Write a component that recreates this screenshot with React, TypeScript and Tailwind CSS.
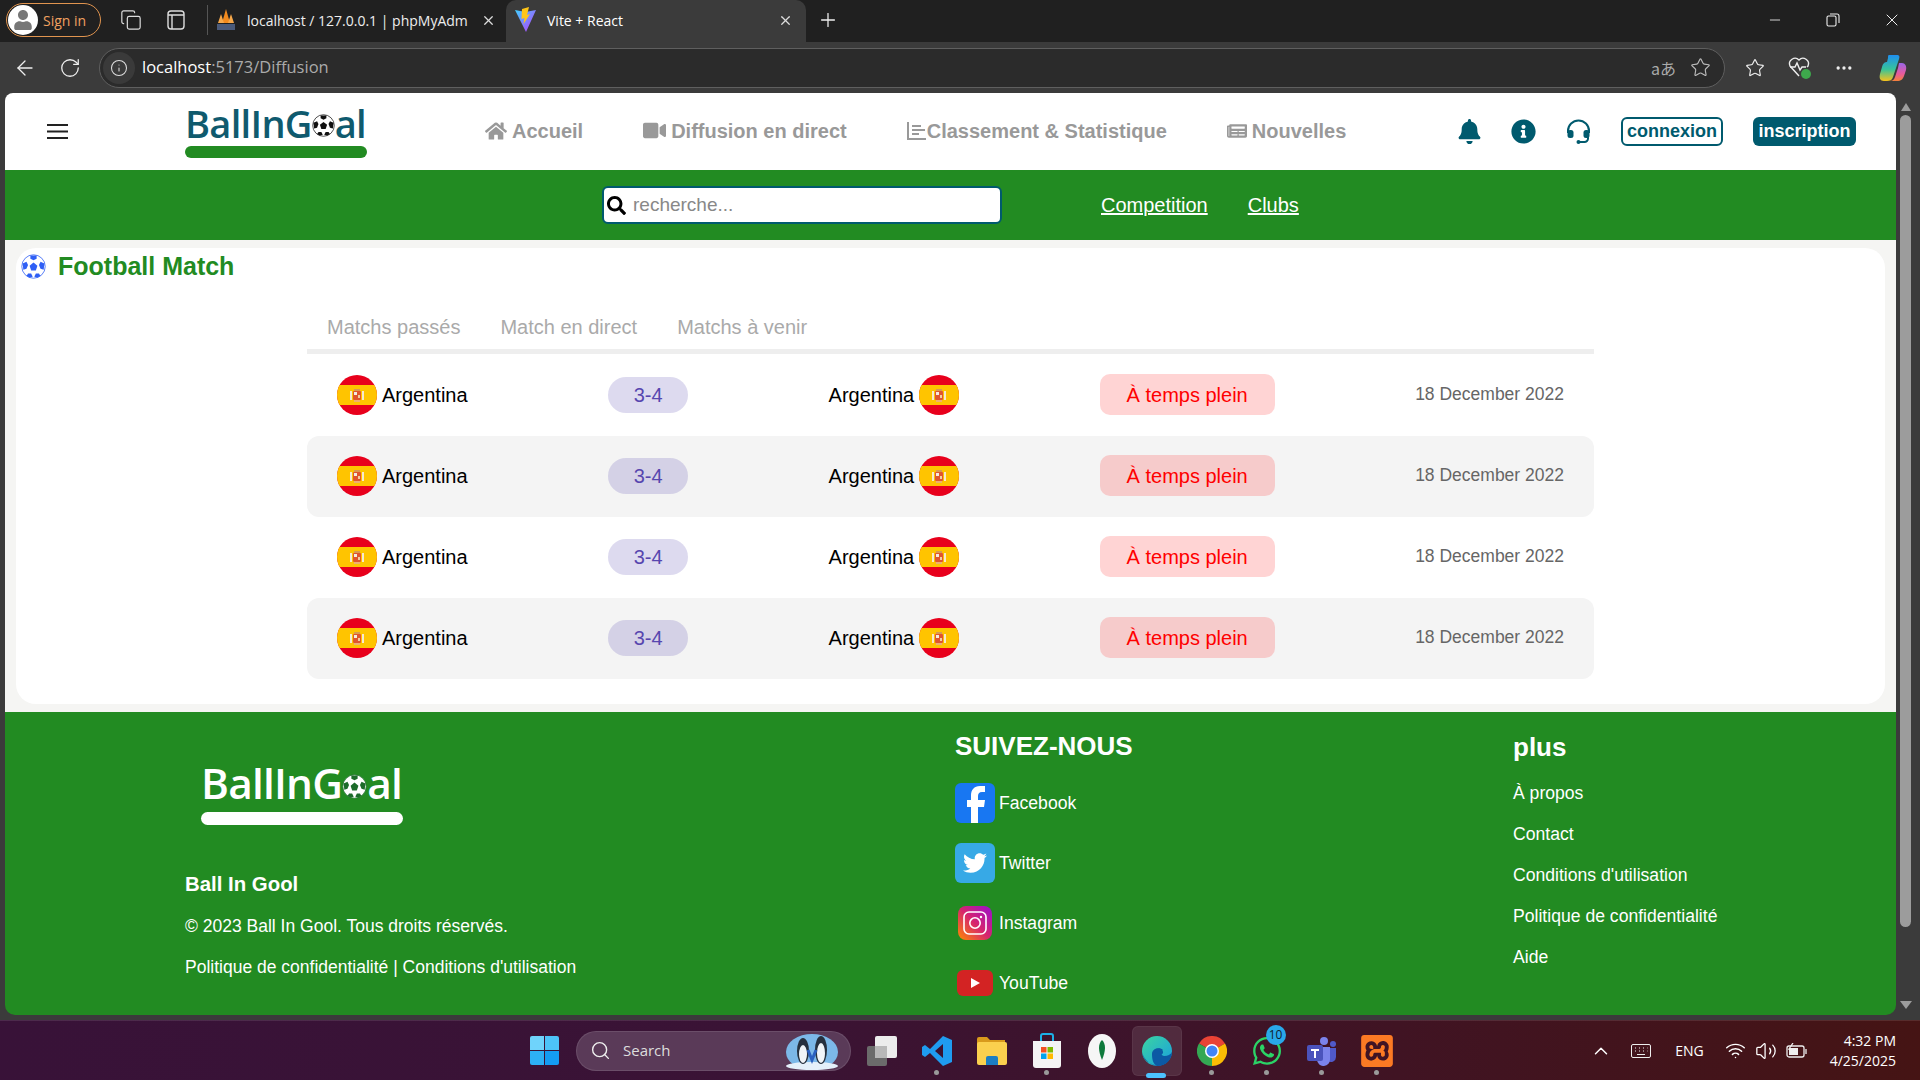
import { ArrowLeft, ChevronUp, Copy, Info, Minus, MoreHorizontal, Plus, RotateCw, Search, Star, Volume2, Wifi, X } from "lucide-react";
import { FaBell, FaHome, FaInfoCircle, FaNewspaper, FaSearch, FaTwitter, FaUser, FaVideo, FaWhatsapp } from "react-icons/fa";
import { SiXampp } from "react-icons/si";

const MATCHES = [0, 1, 2, 3];
const MORE_LINKS = ["À propos", "Contact", "Conditions d'utilisation", "Politique de confidentialité", "Aide"];

function SpainFlag() {
  return (
    <svg width="40" height="40" viewBox="0 0 40 40" className="shrink-0">
      <defs>
        <clipPath id="flag-clip">
          <circle cx="20" cy="20" r="20" />
        </clipPath>
      </defs>
      <g clipPath="url(#flag-clip)">
        <rect width="40" height="40" fill="#e8001c" />
        <rect y="10" width="40" height="20" fill="#ffc400" />
        <rect x="13" y="16" width="2" height="9" fill="#f6ead0" />
        <rect x="25" y="16" width="2" height="9" fill="#f6ead0" />
        <rect x="17" y="14" width="6" height="2" fill="#d99a50" />
        <rect x="16" y="16" width="8" height="9" rx="1" fill="#e0552e" />
        <rect x="17" y="17" width="3" height="3" fill="#f2ede0" />
        <rect x="21" y="20" width="2" height="3" fill="#f2d0a0" />
        <rect x="17" y="25" width="6" height="2" fill="#f0b070" />
      </g>
    </svg>
  );
}

function SoccerBall({ size, dark }: { size: number; dark: string }) {
  return (
    <svg width={size} height={size} viewBox="0 0 32 32" className="shrink-0">
      <circle cx="16" cy="16" r="15" fill="#fff" stroke={dark} strokeWidth="1" />
      <polygon points="16,11 21,15 19,21 13,21 11,15" fill={dark} />
      <polygon points="12,2 20,2 20,6 16,8 12,6" fill={dark} />
      <polygon points="2,12 7,10 9,14 7,19 3,20" fill={dark} />
      <polygon points="30,12 25,10 23,14 25,19 29,20" fill={dark} />
      <polygon points="9,25 13,25 15,29 11,30 7,28" fill={dark} />
      <polygon points="23,25 19,25 17,29 21,30 25,28" fill={dark} />
    </svg>
  );
}

function Logo({ text, bar, ball, ballSize }: { text: string; bar: string; ball: string; ballSize: number }) {
  return (
    <div className="flex flex-col">
      <div className={`flex items-center font-['Open_Sans',sans-serif] leading-none font-semibold ${text}`}>
        <span>BallInG</span>
        <span className="mt-[6px]">
          <SoccerBall size={ballSize} dark={ball} />
        </span>
        <span>al</span>
      </div>
      <div className={`rounded-full ${bar}`} />
    </div>
  );
}

function NavItem({ icon, label, gap }: { icon: React.ReactNode; label: string; gap: string }) {
  return (
    <a className={`flex items-center text-[20px] font-bold text-[#999] ${gap}`}>
      {icon}
      {label}
    </a>
  );
}

function MatchRow({ shaded }: { shaded: boolean }) {
  return (
    <div className={`flex h-[81px] items-center justify-between px-[30px] pb-[2px] ${shaded ? "rounded-[12px] bg-[#f4f4f4]" : ""}`}>
      <div className="flex items-center gap-[5px] text-[20px] text-black">
        <SpainFlag />
        Argentina
      </div>
      <div className="flex h-[36px] w-[80px] items-center justify-center rounded-[18px] bg-[#5746af]/20 text-[20px] text-[#5746af]">3-4</div>
      <div className="flex items-center gap-[5px] text-[20px] text-black">
        Argentina
        <SpainFlag />
      </div>
      <div className="flex h-[41px] w-[175px] items-center justify-center rounded-[10px] bg-[#ff0000]/[0.17] text-[20px] text-[#ff0000]">À temps plein</div>
      <div className="text-[17.5px] text-[#666]">18 December 2022</div>
    </div>
  );
}

function SocialRow({ icon, label }: { icon: React.ReactNode; label: string }) {
  return (
    <a className="flex h-[40px] items-center gap-[4px] text-[17.6px] text-white">
      <span className="flex w-[40px] justify-center">{icon}</span>
      {label}
    </a>
  );
}

function BrowserChrome() {
  return (
    <div className="font-['Open_Sans',sans-serif] text-white">
      <div className="flex h-[42px] items-center bg-[#202020] pb-[2px]">
        <div className="ml-[6px] flex h-[34px] w-[95px] items-center gap-[5px] rounded-full border border-[#e0944f] pl-[1px]">
          <span className="flex h-[30px] w-[30px] items-center justify-center overflow-hidden rounded-full bg-white text-[#777]">
            <FaUser size={20} />
          </span>
          <span className="text-[14px] text-[#f0a060]">Sign in</span>
        </div>
        <Copy size={22} strokeWidth={1.3} className="ml-[19px] text-[#ddd]" />
        <svg width="18" height="20" viewBox="0 0 18 20" className="ml-[25px]" fill="none" stroke="#ddd" strokeWidth="1.4">
          <rect x="1" y="1" width="16" height="18" rx="3" />
          <path d="M1 5h16M5 5v14" />
        </svg>
        <div className="ml-[22px] h-[30px] w-px bg-[#555]" />
        <div className="ml-[7px] flex w-[291px] items-center">
          <svg width="20" height="24" viewBox="0 0 20 24" className="ml-[1px]">
            <path d="M10 1 14 15H6Z" fill="#f28a1e" />
            <path d="M5 6 8 15H2Z" fill="#f7a84a" />
            <path d="M15 6 18 15h-6Z" fill="#f7a84a" />
            <rect x="1" y="16" width="18" height="6" fill="#4a5a7a" />
          </svg>
          <span className="ml-[11px] w-[222px] text-[14px] whitespace-nowrap text-[#eee]">localhost / 127.0.0.1 | phpMyAdm</span>
          <X size={15} className="ml-[12px] text-[#ddd]" />
        </div>
        <div className="-mb-[2px] flex h-[42px] w-[300px] items-center rounded-t-[10px] bg-[#3b3b3b] pb-[2px] pl-[9px]">
          <svg width="21" height="26" viewBox="0 0 21 26">
            <defs>
              <linearGradient id="vite-a" x1="0" y1="0" x2="1" y2="1">
                <stop offset="0" stopColor="#41d1ff" />
                <stop offset="1" stopColor="#bd34fe" />
              </linearGradient>
            </defs>
            <path d="M0 3 10.5 5 21 3 11 25Z" fill="url(#vite-a)" />
            <path d="M14 0 7 2 6.5 12 9.5 11 8.5 17 15 7 12 8Z" fill="#ffc517" />
          </svg>
          <span className="ml-[11px] text-[14px]">Vite + React</span>
          <X size={15} className="ml-[155px] text-[#ddd]" />
        </div>
        <Plus size={22} strokeWidth={1.4} className="ml-[11px] text-[#eee]" />
        <Minus size={16} strokeWidth={1.3} className="ml-[928px] text-[#eee]" />
        <svg width="14" height="14" viewBox="0 0 14 14" className="ml-[43px]" fill="none" stroke="#eee" strokeWidth="1.1">
          <rect x="1" y="3" width="9" height="10" rx="1.5" />
          <path d="M4 1h7a2 2 0 0 1 2 2v7" />
        </svg>
        <X size={20} strokeWidth={1.2} className="ml-[42px] text-[#eee]" />
      </div>
      <div className="flex h-[51px] items-center bg-[#3b3b3b]">
        <ArrowLeft size={24} strokeWidth={1.3} className="ml-[13px] text-[#eee]" />
        <RotateCw size={22} strokeWidth={1.4} className="ml-[22px] text-[#eee]" />
        <div className="ml-[18px] flex h-[40px] w-[1626px] items-center rounded-full border border-[#5f5f5f] bg-[#2b2b2b] pr-[13px]">
          <span className="ml-[3px] flex h-[32px] w-[32px] items-center justify-center rounded-full bg-[#3a3a3a]">
            <Info size={18} strokeWidth={1.4} className="text-[#ddd]" />
          </span>
          <span className="ml-[7px] text-[16.5px] text-white">localhost</span>
          <span className="text-[16.5px] text-[#aaa]">:5173/Diffusion</span>
          <span className="ml-auto font-['Noto_Sans_CJK_JP',sans-serif] text-[16px] text-[#aaa]">aあ</span>
          <Star size={21} strokeWidth={1.3} className="ml-[14px] text-[#bbb]" />
        </div>
        <Star size={20} strokeWidth={1.4} className="ml-[20px] text-[#eee]" />
        <svg width="26" height="28" viewBox="0 0 26 28" className="ml-[22px]" fill="none" stroke="#eee" strokeWidth="1.4">
          <path d="M12 22 3 12a5.5 5.5 0 0 1 9-6 5.5 5.5 0 0 1 9 6l-1 1" />
          <path d="M3 13h5l2-4 3 7 2-3h4" />
          <circle cx="19" cy="20" r="5" fill="#3ea84c" stroke="none" />
        </svg>
        <MoreHorizontal size={20} className="ml-[21px] text-[#eee]" />
        <svg width="30" height="30" viewBox="0 0 30 30" className="ml-[24px]">
          <defs>
            <linearGradient id="copilot-a" x1="0" y1="0" x2="0" y2="1">
              <stop offset="0" stopColor="#1f8ff0" />
              <stop offset="0.55" stopColor="#37c49a" />
              <stop offset="1" stopColor="#f7c21c" />
            </linearGradient>
            <linearGradient id="copilot-b" x1="0" y1="0" x2="0" y2="1">
              <stop offset="0" stopColor="#9a66e8" />
              <stop offset="0.6" stopColor="#e85a9c" />
              <stop offset="1" stopColor="#f5813a" />
            </linearGradient>
          </defs>
          <path d="M11 2h8c2 0 3 1 2 4l-6 18c-1 3-3 4-6 4H6c-4 0-5-3-4-7l2-7c1-4 3-5 5-5l1-4c0-2 0-3 1-3Z" fill="url(#copilot-a)" />
          <path d="M19 28h-7c2 0 4-1 5-4l2-6 1-3 1-5h3c3 0 5 3 4 7l-2 6c-1 3-3 5-7 5Z" fill="url(#copilot-b)" />
        </svg>
      </div>
    </div>
  );
}

function TaskIcon({ children, dot, active }: { children: React.ReactNode; dot?: boolean; active?: boolean }) {
  return (
    <div className="relative flex h-[60px] w-[55px] items-center justify-center">
      {active && <div className="absolute top-[5px] left-[2.5px] h-[50px] w-[50px] rounded-[6px] border border-white/5 bg-white/10" />}
      <div className="relative flex">{children}</div>
      {dot && <div className="absolute bottom-[6px] left-[25px] h-[5px] w-[5px] rounded-full bg-[#9a9a9a]" />}
      {active && <div className="absolute bottom-[3px] left-[17px] h-[5px] w-[20px] rounded-full bg-[#4cc2ff]" />}
    </div>
  );
}

function Taskbar() {
  return (
    <div className="flex h-[60px] items-center border-t border-white/10 bg-[linear-gradient(90deg,#381238,#3a1335_40%,#451414)] pl-[530px] font-['Open_Sans',sans-serif] text-white">
      <div className="grid h-[29px] w-[29px] grid-cols-2 gap-[1px]">
        <div className="rounded-tl-[2px] bg-[#6fd3fb]" />
        <div className="rounded-tr-[2px] bg-[#4dc3f8]" />
        <div className="rounded-bl-[2px] bg-[#2db0f5]" />
        <div className="rounded-br-[2px] bg-[#149cf3]" />
      </div>
      <div className="ml-[17px] flex h-[40px] w-[275px] items-center rounded-full border border-white/10 bg-[#5a3a58] pl-[13px]">
        <Search size={21} strokeWidth={1.6} className="text-[#eee]" />
        <span className="ml-[12px] text-[15px] text-[#ddd]">Search</span>
        <svg width="56" height="38" viewBox="0 0 56 38" className="ml-[113px]">
          <ellipse cx="28" cy="20" rx="26" ry="18" fill="#7cb8e8" />
          <ellipse cx="28" cy="34" rx="26" ry="4" fill="#e4f0fa" />
          <ellipse cx="19" cy="19" rx="6" ry="13" fill="#26303e" />
          <ellipse cx="19" cy="22" rx="4" ry="9" fill="#f0f4f8" />
          <ellipse cx="37" cy="18" rx="6" ry="14" fill="#26303e" />
          <ellipse cx="37" cy="21" rx="4" ry="10" fill="#f0f4f8" />
          <path d="M24 18 28 28 32 18" fill="none" stroke="#2a60c0" strokeWidth="3" />
        </svg>
      </div>
      <div className="ml-[3px] flex">
        <TaskIcon>
          <svg width="32" height="32" viewBox="0 0 32 32">
            <rect x="1" y="11" width="20" height="20" rx="2" fill="#6b6b6b" />
            <rect x="9" y="1" width="22" height="22" rx="2" fill="#ececec" />
            <rect x="9" y="11" width="12" height="12" fill="#b8b8b8" />
          </svg>
        </TaskIcon>
        <TaskIcon dot>
          <svg width="30" height="30" viewBox="0 0 30 30">
            <path d="M21 0 30 4V26L21 30 8 17 3 21 0 19V11L3 9 8 13Z M21 8 13 15 21 22Z" fill="#1f9cf0" fillRule="evenodd" />
          </svg>
        </TaskIcon>
        <TaskIcon>
          <svg width="30" height="28" viewBox="0 0 30 28">
            <path d="M0 2a2 2 0 0 1 2-2h8l3 3h15v6H0Z" fill="#d99a1c" />
            <rect y="5" width="30" height="23" rx="2" fill="#fbd04e" />
            <path d="M9 21a2 2 0 0 1 2-2h8a2 2 0 0 1 2 2v7H9Z" fill="#1c7ec2" />
          </svg>
        </TaskIcon>
        <TaskIcon dot>
          <svg width="30" height="36" viewBox="0 0 30 36">
            <path d="M9 8V3a2 2 0 0 1 2-2h8a2 2 0 0 1 2 2v5" fill="none" stroke="#1cb0e8" strokeWidth="2" />
            <path d="M1 8h28v24a3 3 0 0 1-3 3H4a3 3 0 0 1-3-3Z" fill="#f4f4f4" />
            <rect x="9" y="14" width="5.5" height="5.5" fill="#f25022" />
            <rect x="15.5" y="14" width="5.5" height="5.5" fill="#7fba00" />
            <rect x="9" y="20.5" width="5.5" height="5.5" fill="#00a4ef" />
            <rect x="15.5" y="20.5" width="5.5" height="5.5" fill="#ffb900" />
          </svg>
        </TaskIcon>
        <TaskIcon>
          <svg width="28" height="34" viewBox="0 0 28 34">
            <ellipse cx="14" cy="17" rx="14" ry="17" fill="#f6f6f6" />
            <path d="M14 6c4 4 4 10 0 20C10 16 10 10 14 6Z" fill="#0f7a3c" />
          </svg>
        </TaskIcon>
        <TaskIcon active>
          <svg width="30" height="30" viewBox="0 0 30 30">
            <defs>
              <linearGradient id="edge-a" x1="0" y1="0" x2="1" y2="1">
                <stop offset="0" stopColor="#3bd5a0" />
                <stop offset="1" stopColor="#1a9fe0" />
              </linearGradient>
            </defs>
            <circle cx="15" cy="15" r="15" fill="url(#edge-a)" />
            <path d="M30 16c0 4-5 6-9 4-3-2-2-5 0-6-3-3-9-2-10 3-1 6 4 12 11 12 1 0 1 0 0 0C12 31 0 26 0 15 0 20 6 29 16 30c8 0 14-7 14-14Z" fill="#0c59a4" />
            <path d="M10 18c0-5 6-7 10-4 2 2 1 4-1 5 3 2 9 1 11-3-1 8-7 14-15 14-4-2-5-7-5-12Z" fill="#0c59a4" />
          </svg>
        </TaskIcon>
        <TaskIcon dot>
          <svg width="30" height="30" viewBox="0 0 30 30">
            <path d="M15 15 28 7.5A15 15 0 0 0 2 7.5Z" fill="#ea4335" />
            <path d="M15 15 2 7.5A15 15 0 0 0 15 30Z" fill="#34a853" />
            <path d="M15 15 15 30A15 15 0 0 0 28 7.5Z" fill="#fbbc04" />
            <circle cx="15" cy="15" r="7" fill="#fff" />
            <circle cx="15" cy="15" r="5.5" fill="#4285f4" />
          </svg>
        </TaskIcon>
        <TaskIcon dot>
          <FaWhatsapp size={32} className="text-[#2bd366]" />
          <span className="absolute -top-[10px] left-[15px] flex h-[20px] w-[20px] items-center justify-center rounded-full bg-[#29a8ea] text-[12px] text-[#10202c]">10</span>
        </TaskIcon>
        <TaskIcon dot>
          <svg width="30" height="30" viewBox="0 0 30 30">
            <circle cx="17" cy="5" r="4" fill="#7b83eb" />
            <circle cx="26" cy="8" r="3" fill="#5059c9" />
            <path d="M21 12h8v9a5 5 0 0 1-8 4Z" fill="#5059c9" />
            <path d="M10 11h13v12a6 6 0 0 1-13 1Z" fill="#7b83eb" />
            <rect x="0" y="9" width="16" height="16" rx="2" fill="#4b53bc" />
            <path d="M4 13h8v2H9v7H7v-7H4Z" fill="#fff" />
          </svg>
        </TaskIcon>
        <TaskIcon dot>
          <SiXampp size={32} className="text-[#fb7a24]" />
        </TaskIcon>
      </div>
      <div className="ml-auto flex items-center pr-[24px]">
        <ChevronUp size={22} strokeWidth={1.6} className="mr-[19px] text-white" />
        <svg width="20" height="14" viewBox="0 0 20 14" className="mr-[24px]" fill="none" stroke="#eee" strokeWidth="1">
          <rect x="0.5" y="0.5" width="19" height="13" rx="1.5" />
          <path d="M4 4h1M8 4h1M12 4h1M16 4h.5M4 7h1M8 7h1M12 7h1M16 7h.5M6 10.500h8" />
        </svg>
        <span className="mr-[21px] text-[14px]">ENG</span>
        <Wifi size={21} strokeWidth={1.7} className="mr-[9px] text-white" />
        <Volume2 size={22} strokeWidth={1.4} className="mr-[9px] text-white" />
        <svg width="22" height="16" viewBox="0 0 22 16" className="mr-[22px]" fill="none" stroke="#eee" strokeWidth="1.3">
          <rect x="1" y="3" width="17" height="11" rx="2" />
          <rect x="3" y="5" width="9" height="7" fill="#eee" stroke="none" />
          <path d="M20 6v5" />
          <path d="M7 0 3 6h4l-2 4" />
        </svg>
        <div className="flex flex-col items-end text-[14px] leading-[20px]">
          <span>4:32 PM</span>
          <span>4/25/2025</span>
        </div>
      </div>
    </div>
  );
}

export default function App() {
  return (
    <div className="flex h-[1080px] w-[1920px] flex-col overflow-hidden bg-[#3b3b3b] font-['Liberation_Sans',Arial,sans-serif]">
      <BrowserChrome />
      <div className="flex h-[927px]">
        <main className="ml-[5px] h-[922px] w-[1891px] overflow-hidden rounded-t-[8px] rounded-b-[10px]">
          <header className="flex h-[77px] items-center bg-white pr-[40px] pl-[42px]">
            <svg width="21" height="15" viewBox="0 0 21 15" className="shrink-0" stroke="#222" strokeWidth="2">
              <path d="M0 1h21M0 7.500h21M0 14h21" />
            </svg>
            <div className="mb-[2px] ml-[117px] w-[182px]">
              <Logo text="h-[39px] text-[38px] tracking-[-0.7px] text-[#0f5a6e]" bar="mt-[4px] h-[12px] bg-[#228b22]" ball="#111" ballSize={23} />
            </div>
            <nav className="mb-[2px] ml-[118px] flex items-center gap-[60px]">
              <NavItem icon={<FaHome size={22} />} label="Accueil" gap="gap-[5px]" />
              <NavItem icon={<FaVideo size={23} />} label="Diffusion en direct" gap="gap-[5px]" />
              <NavItem
                icon={
                  <svg width="19" height="19" viewBox="0 0 19 19" fill="none" stroke="#999" strokeWidth="2">
                    <path d="M1 1v17h18" />
                    <path d="M5 5h9M5 9h13M5 13h7" />
                  </svg>
                }
                label="Classement & Statistique"
                gap="gap-[1px]"
              />
              <NavItem icon={<FaNewspaper size={20} />} label="Nouvelles" gap="gap-[5px]" />
            </nav>
            <div className="ml-auto flex items-center gap-[30px] text-[#005a6e]">
              <FaBell size={25} className="-mr-[1px]" />
              <FaInfoCircle size={25} />
              <svg width="25" height="25" viewBox="0 0 25 25" fill="none" stroke="currentColor" strokeWidth="2">
                <path d="M2 14v-2a10.500 10.500 0 0 1 21 0v2" />
                <rect x="1.500" y="11" width="6" height="8" rx="2.500" fill="currentColor" stroke="none" />
                <rect x="17.500" y="11" width="6" height="8" rx="2.500" fill="currentColor" stroke="none" />
                <path d="M22 18v1.500a3.500 3.500 0 0 1-3.500 3.500H13" />
                <circle cx="12.500" cy="23" r="2" fill="currentColor" stroke="none" />
              </svg>
              <a className="flex h-[29px] w-[102px] items-center justify-center rounded-[6px] border-2 border-[#005a6e] text-[18px] font-bold">connexion</a>
              <a className="flex h-[29px] w-[103px] items-center justify-center rounded-[6px] bg-[#005a6e] text-[18px] font-bold text-white">inscription</a>
            </div>
          </header>

          <div className="flex h-[70px] items-center bg-[#228b22] pl-[597px]">
            <div className="flex h-[38px] w-[400px] items-center rounded-[6px] border-2 border-[#005a6e] bg-white pl-[3px]">
              <FaSearch size={19} className="shrink-0 text-black" />
              <input placeholder="recherche..." className="ml-[7px] min-w-0 flex-1 bg-transparent text-[19px] outline-none placeholder:text-[#888]" />
            </div>
            <a className="ml-[99px] text-[20px] text-white underline">Competition</a>
            <a className="ml-[40px] text-[20px] text-white underline">Clubs</a>
          </div>

          <section className="h-[472px] bg-[#f5f5f3] py-[8px] pr-[11px] pl-[11px]">
            <div className="h-[456px] rounded-[20px] bg-white pt-[6px]">
              <div className="flex h-[25px] items-center gap-[12px] pl-[5px]">
                <SoccerBall size={25} dark="#2f5ff5" />
                <h1 className="text-[25px] leading-[25px] font-bold text-[#228b22]">Football Match</h1>
              </div>
              <div className="mx-auto mt-[25px] w-[1287px]">
                <div className="flex h-[50px] gap-[40px] border-b-[5px] border-[#eee] px-[20px] pt-[8px] text-[20px] text-[#aaa]">
                  <span>Matchs passés</span>
                  <span>Match en direct</span>
                  <span>Matchs à venir</span>
                </div>
                <div className="mt-[1px]">
                  {MATCHES.map((m) => (
                    <MatchRow key={m} shaded={m % 2 === 1} />
                  ))}
                </div>
              </div>
            </div>
          </section>

          <footer className="flex h-[303px] bg-[#228b22] pl-[180px] text-white">
            <div className="w-[770px]">
              <div className="mt-[49px] ml-[16px] w-[202px]">
                <Logo text="h-[44px] text-[42.4px] tracking-[-0.8px] text-white" bar="mt-[7px] h-[13px] bg-white" ball="#1c6b2a" ballSize={25} />
              </div>
              <div className="mt-[44px] text-[20.4px] leading-[30px] font-bold">Ball In Gool</div>
              <p className="mt-[14px] text-[17.5px] leading-[26px]">© 2023 Ball In Gool. Tous droits réservés.</p>
              <p className="mt-[15px] text-[17.5px] leading-[26px]">Politique de confidentialité | Conditions d'utilisation</p>
            </div>
            <div className="w-[558px] pt-[15px]">
              <h2 className="text-[26px] font-bold">SUIVEZ-NOUS</h2>
              <div className="mt-[17px] flex flex-col gap-[20px]">
                <SocialRow
                  label="Facebook"
                  icon={
                    <svg width="40" height="40" viewBox="0 0 40 40">
                      <rect width="40" height="40" rx="6" fill="#1877f2" />
                      <path d="M23 40V24h6l1-7h-7v-4c0-2 1-4 4-4h3V3h-5c-6 0-9 4-9 9v5h-4v7h4v16Z" fill="#fff" />
                    </svg>
                  }
                />
                <SocialRow
                  label="Twitter"
                  icon={
                    <span className="flex h-[40px] w-[40px] items-center justify-center rounded-[6px] bg-[#37a9e6] text-white">
                      <FaTwitter size={24} />
                    </span>
                  }
                />
                <SocialRow
                  label="Instagram"
                  icon={
                    <svg width="34" height="34" viewBox="0 0 34 34">
                      <defs>
                        <linearGradient id="insta" x1="0" y1="1" x2="1" y2="0">
                          <stop offset="0" stopColor="#ff8a00" />
                          <stop offset="0.5" stopColor="#d6246e" />
                          <stop offset="1" stopColor="#9a0fd0" />
                        </linearGradient>
                      </defs>
                      <rect width="34" height="34" rx="8" fill="url(#insta)" />
                      <rect x="6" y="6" width="22" height="22" rx="5" fill="none" stroke="#fff" strokeWidth="1.6" />
                      <circle cx="17" cy="17" r="5.200" fill="none" stroke="#fff" strokeWidth="1.6" />
                      <circle cx="23" cy="11" r="1.200" fill="#fff" />
                    </svg>
                  }
                />
                <SocialRow
                  label="YouTube"
                  icon={
                    <svg width="36" height="26" viewBox="0 0 36 26">
                      <rect width="36" height="26" rx="6" fill="#d32323" />
                      <path d="M14 8v10l9-5Z" fill="#fff" />
                    </svg>
                  }
                />
              </div>
            </div>
            <div className="pt-[16px]">
              <h2 className="text-[26px] font-bold">plus</h2>
              <ul className="mt-[16px] flex flex-col gap-[20px] text-[17.6px] leading-[21px]">
                {MORE_LINKS.map((link) => (
                  <li key={link}>{link}</li>
                ))}
              </ul>
            </div>
          </footer>
        </main>
        <div className="ml-[4px] flex h-[922px] w-[11px] flex-col items-center">
          <div className="mt-[10px] h-0 w-0 border-x-[5px] border-b-[8px] border-x-transparent border-b-[#9c9c9c]" />
          <div className="mt-[4px] h-[812px] w-[11px] rounded-full bg-[#9c9c9c]" />
          <div className="mt-auto mb-[6px] h-0 w-0 border-x-[6px] border-t-[8px] border-x-transparent border-t-[#9c9c9c]" />
        </div>
      </div>
      <Taskbar />
    </div>
  );
}
